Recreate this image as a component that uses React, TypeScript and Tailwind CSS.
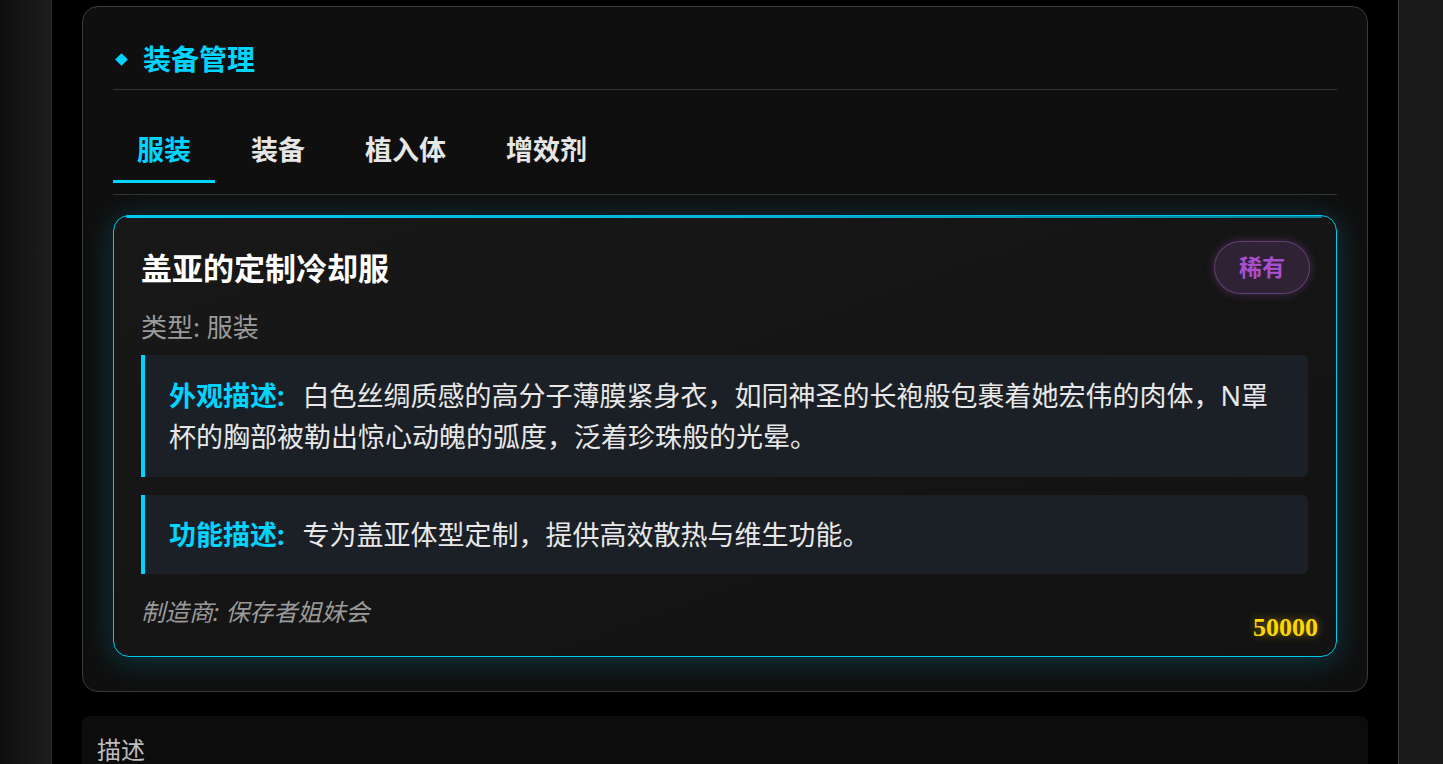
import React from "react";

const tabs = ["服装", "装备", "植入体", "增效剂"];

const cjk = { fontFamily: '"Noto Sans", "Noto Sans CJK SC", sans-serif' };

const App: React.FC = () => {
  return (
    <div className="min-h-screen flex bg-black text-white" style={cjk}>
      {/* left rail */}
      <div className="w-[52px] shrink-0 border-r border-[#2e2e2e] bg-gradient-to-r from-[#0f0f0f] to-[#1d1d1d]" />

      <main className="flex-1 px-[30px] pt-[6px]">
        {/* ================= EQUIPMENT PANEL ================= */}
        <section className="rounded-2xl border border-[#3a3a3a] bg-[#0f0f0f] px-[30px] pt-[32px] pb-[34px]">
          <div className="flex items-center gap-[17px] border-b border-[#333] pb-[10px] pl-[4px]">
            <span className="w-[9px] h-[9px] rotate-45 bg-[#00d4ff]" />
            <h2 className="text-[28px] leading-[40px] font-bold text-[#00d4ff]">装备管理</h2>
          </div>

          <div className="mt-[20px] flex gap-[12px] border-b border-[#333] pb-[11px]">
            {tabs.map((t, i) => (
              <button
                key={t}
                className={
                  i === 0
                    ? "px-[24px] pt-[22px] pb-[12px] text-[27px] leading-[36px] font-bold text-[#00d4ff] border-b-[3px] border-[#00d4ff]"
                    : "px-[24px] pt-[22px] pb-[12px] text-[27px] leading-[36px] font-bold text-[#e6e6e6] border-b-[3px] border-transparent"
                }
              >
                {t}
              </button>
            ))}
          </div>

          {/* item card */}
          <div className="relative mt-[20px] rounded-2xl border border-[#00c8f0] bg-gradient-to-br from-[#181818] to-[#121212] pl-[27px] pr-[28px] pt-[25px] pb-[26px] shadow-[0_4px_30px_rgba(0,212,255,0.22)]">
            <div className="absolute left-[12px] right-[14px] -top-px h-[3px] rounded-full bg-gradient-to-r from-[#00c8f0] via-[#00b4dd] to-[#00c8f0]/60" />

            <div className="flex items-center justify-between">
              <h3 className="text-[31px] leading-[40px] font-bold text-white">盖亚的定制冷却服</h3>
              <span className="mr-[-2px] rounded-full border border-[#9b59b6]/50 bg-[#9b59b6]/20 px-[24px] py-[8px] text-[23px] leading-[35px] font-bold text-[#a84fd0] shadow-[0_0_10px_rgba(155,89,182,0.35)]">
                稀有
              </span>
            </div>

            <p className="mt-[15px] text-[26px] leading-[36px] text-[#9a9a9a]">类型: 服装</p>

            <div className="mt-[10px] rounded-r-[6px] border-l-4 border-[#00d4ff] bg-[#1b2027] pl-[24px] pr-[20px] py-[20px] text-[27px] leading-[41px] text-[#e8e8e8]">
              <strong className="mr-[18px] text-[#00d4ff]">外观描述:</strong>
              白色丝绸质感的高分子薄膜紧身衣，如同神圣的长袍般包裹着她宏伟的肉体，N罩杯的胸部被勒出惊心动魄的弧度，泛着珍珠般的光晕。
            </div>

            <div className="mt-[18px] rounded-r-[6px] border-l-4 border-[#00d4ff] bg-[#1b2027] pl-[24px] pr-[20px] py-[19px] text-[27px] leading-[41px] text-[#e8e8e8]">
              <strong className="mr-[18px] text-[#00d4ff]">功能描述:</strong>
              专为盖亚体型定制，提供高效散热与维生功能。
            </div>

            <p className="mt-[20px] text-[24px] leading-[36px] italic text-[#9a9a9a]">制造商: 保存者姐妹会</p>

            <span className="absolute right-[18px] bottom-[15px] font-['Liberation_Serif',serif] text-[26px] leading-none font-semibold text-[#ffd700] [text-shadow:0_0_8px_rgba(255,215,0,0.45)]">
              50000
            </span>
          </div>
        </section>

        {/* ================= DESCRIPTION ================= */}
        <section className="mt-[24px] rounded-lg bg-[#0c0c0c] px-[15px] pt-[16px] pb-[20px]">
          <p className="text-[24px] leading-[36px] text-[#bdbdbd]">描述</p>
        </section>
      </main>

      {/* right rail */}
      <div className="w-[45px] shrink-0 border-l border-[#3a3a3a] bg-[#1a1a1a]" />
    </div>
  );
};

export default App;
